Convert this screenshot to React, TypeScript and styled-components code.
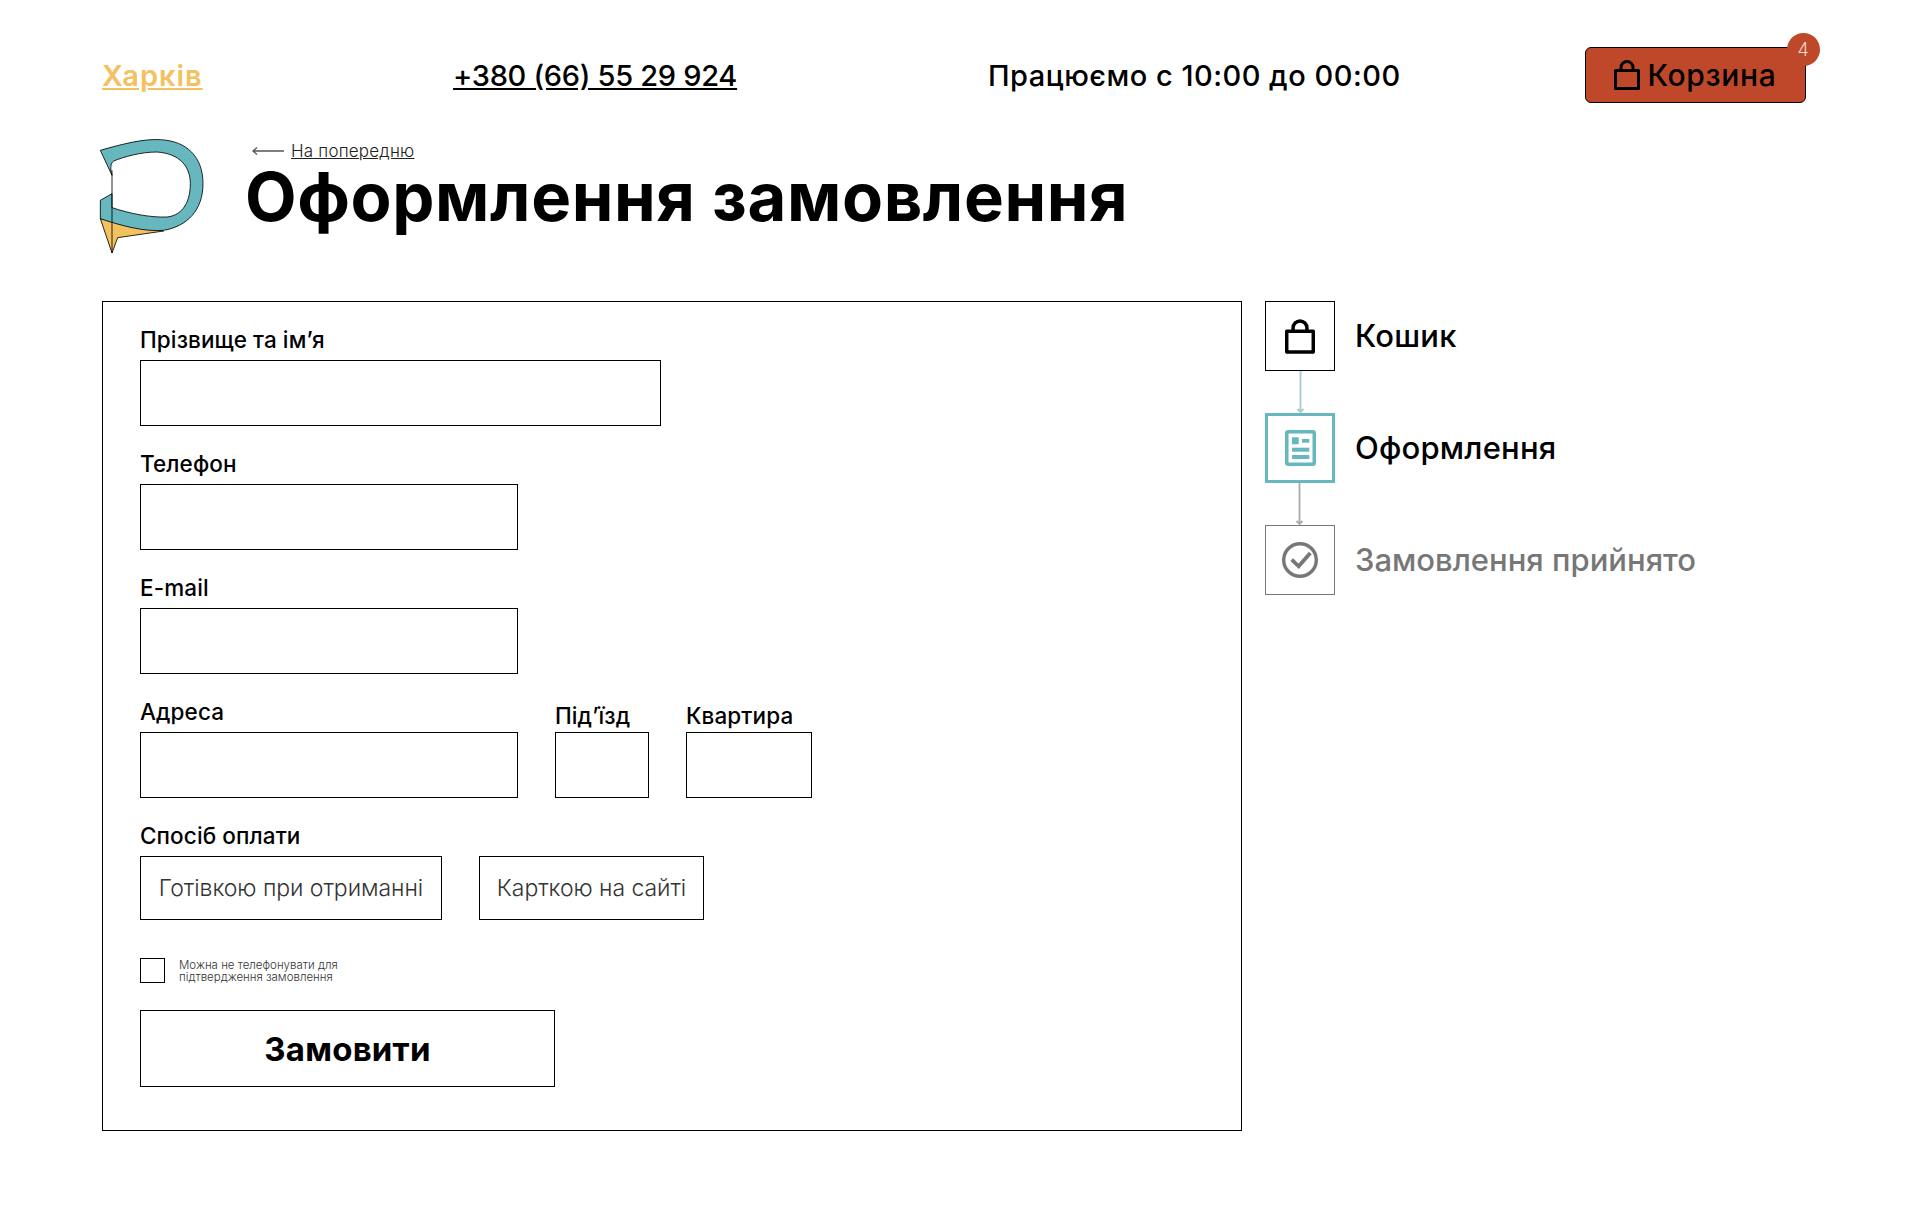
import styled, { createGlobalStyle } from 'styled-components';

const GlobalStyle = createGlobalStyle`
  * { box-sizing: border-box; }
  body {
    margin: 0;
    background: #fff;
    color: #000;
    font-family: Inter, "Noto Sans", sans-serif;
  }
`;

const Page = styled.div`
  width: 1920px;
  height: 1209px;
  padding: 47px 114px 0 102px;
`;

const Header = styled.header`
  display: flex;
  align-items: center;
  height: 56px;
  font-size: 29px;
`;

const City = styled.a`
  width: 351px;
  color: #f4c15f;
  font-weight: 600;
  letter-spacing: 1px;
  text-decoration: underline;
`;

const Phone = styled.a`
  width: 535px;
  font-weight: 500;
  letter-spacing: -0.3px;
  text-decoration: underline;
`;

const Hours = styled.span`
  width: 597px;
  font-weight: 500;
  letter-spacing: 0.5px;
`;

const CartButton = styled.button`
  position: relative;
  display: flex;
  align-items: center;
  justify-content: center;
  gap: 7px;
  width: 221px;
  height: 56px;
  padding: 0;
  background: #bf482b;
  border: 1px solid #000;
  border-radius: 6px;
  color: #000;
  font: 500 30px Inter, sans-serif;
  letter-spacing: 0.7px;
`;

const Badge = styled.span`
  position: absolute;
  top: -15px;
  right: -15px;
  width: 33px;
  height: 33px;
  border-radius: 50%;
  background: #bf482b;
  color: #f5d9d0;
  font-size: 18px;
  font-weight: 300;
  line-height: 33px;
  text-align: center;
`;

const TitleRow = styled.div`
  display: flex;
  align-items: flex-start;
  margin-top: 37px;
`;

const Logo = styled.svg`
  flex: none;
  width: 110px;
  height: 120px;
  margin: -3px 0 0 -5px;
`;

const TitleCol = styled.div`
  display: flex;
  flex-direction: column;
  margin-left: 38px;
`;

const BackLink = styled.a`
  display: flex;
  align-items: center;
  gap: 7px;
  margin-left: 7px;
  height: 22px;
  font-size: 17px;
  font-weight: 300;
  letter-spacing: 0.2px;
  color: #222;

  span {
    text-decoration: underline;
  }
`;

const Title = styled.h1`
  margin: 0;
  font-size: 67px;
  line-height: 70px;
  font-weight: 700;
  letter-spacing: 0.6px;
  white-space: nowrap;
`;

const Main = styled.main`
  display: flex;
  align-items: flex-start;
  margin-top: 44px;
`;

const Form = styled.form`
  width: 1140px;
  height: 830px;
  padding: 21px 37px 0;
  border: 1px solid #000;
`;

const Row = styled.div`
  display: flex;
  align-items: flex-end;
  gap: 37px;
  margin-bottom: 21px;
`;

const Field = styled.label`
  display: flex;
  flex-direction: column;
`;

const Label = styled.span<{ $low?: boolean }>`
  margin-bottom: ${p => (p.$low ? 0 : 3)}px;
  font-size: 22.5px;
  line-height: ${p => (p.$low ? 32 : 34)}px;
  font-weight: 500;
  letter-spacing: 0.1px;
`;

const Input = styled.input<{ $w: number }>`
  display: block;
  width: ${p => p.$w}px;
  height: 66px;
  background: #fff;
  border: 1px solid #000;
  border-radius: 0;
`;

const Options = styled.div`
  display: flex;
  gap: 37px;
`;

const Option = styled.button<{ $w: number }>`
  width: ${p => p.$w}px;
  height: 64px;
  padding: 0;
  background: #fff;
  border: 1px solid #000;
  color: #333;
  font: 300 23px Inter, sans-serif;
  letter-spacing: -0.05px;
`;

const Consent = styled.label`
  display: flex;
  align-items: center;
  gap: 14px;
  margin-top: 38px;
`;

const Check = styled.span`
  width: 25px;
  height: 25px;
  border: 1px solid #000;
`;

const ConsentText = styled.span`
  width: 200px;
  font-size: 11.5px;
  line-height: 12px;
  font-weight: 300;
  color: #333;
`;

const Submit = styled.button`
  display: block;
  width: 415px;
  height: 77px;
  margin-top: 27px;
  background: #fff;
  border: 1px solid #000;
  color: #000;
  font: 700 33px Inter, sans-serif;
  letter-spacing: 0.2px;
`;

const Steps = styled.aside`
  display: flex;
  flex-direction: column;
  margin-left: 23px;
`;

const Step = styled.div`
  display: flex;
  align-items: center;
  gap: 20px;
`;

const StepBox = styled.div<{ $color: string; $thick?: boolean }>`
  display: flex;
  align-items: center;
  justify-content: center;
  width: 70px;
  height: 70px;
  border: ${p => (p.$thick ? 3 : 1)}px solid ${p => p.$color};
  color: ${p => p.$color};
`;

const StepName = styled.span<{ $muted?: boolean }>`
  padding-bottom: 2px;
  font-size: 31px;
  font-weight: 500;
  letter-spacing: ${p => (p.$muted ? 0 : 0.2)}px;
  color: ${p => (p.$muted ? '#777' : '#000')};
`;

const Connector = styled.svg`
  display: block;
  width: 70px;
  height: 42px;
`;

const BagIcon = ({ w, h }: { w: number; h: number }) => (
  <svg width={w} height={h} viewBox="0 0 26 30" fill="none" stroke="currentColor" strokeWidth="3" strokeLinejoin="round">
    <path d="M1.5 10.5h23v18h-23z" />
    <path d="M7 10.5V7.5a6 6 0 0 1 12 0v3" />
  </svg>
);

const App = () => {
  return (
    <Page>
      <GlobalStyle />
      <Header>
        <City>Харків</City>
        <Phone>+380 (66) 55 29 924</Phone>
        <Hours>Працюємо с 10:00 до 00:00</Hours>
        <CartButton>
          <BagIcon w={26} h={30} />
          Корзина
          <Badge>4</Badge>
        </CartButton>
      </Header>

      <TitleRow>
        <Logo viewBox="50 50 330 360">
          <path d="M60 295L95 398L112 352L250 332L200 320Z" fill="#f4c15f" stroke="#000" strokeWidth="2.5" strokeLinejoin="round" />
          <path
            d="M60 90C130 70 190 55 240 58C320 62 368 110 368 190C368 270 320 318 250 330C190 335 120 315 60 295V240L95 220V262C150 280 210 292 260 290C310 285 330 240 330 190C330 140 300 100 230 95C180 95 130 110 100 122C92 128 88 140 95 165Z"
            fill="#67b7bf"
            stroke="#000"
            strokeWidth="2.5"
            strokeLinejoin="round"
          />
          <path d="M95 150V398" stroke="#000" strokeWidth="2.5" fill="none" />
        </Logo>
        <TitleCol>
          <BackLink>
            <svg width="32" height="10" viewBox="0 0 32 10" fill="none" stroke="#555" strokeWidth="1.3">
              <path d="M32 5H1M5 1.5L1 5l4 3.5" />
            </svg>
            <span>На попередню</span>
          </BackLink>
          <Title>Оформлення замовлення</Title>
        </TitleCol>
      </TitleRow>

      <Main>
        <Form>
          <Row>
            <Field>
              <Label>Прізвище та ім’я</Label>
              <Input $w={521} />
            </Field>
          </Row>
          <Row>
            <Field>
              <Label>Телефон</Label>
              <Input $w={378} />
            </Field>
          </Row>
          <Row>
            <Field>
              <Label>E-mail</Label>
              <Input $w={378} />
            </Field>
          </Row>
          <Row>
            <Field>
              <Label>Адреса</Label>
              <Input $w={378} />
            </Field>
            <Field>
              <Label $low>Під’їзд</Label>
              <Input $w={94} />
            </Field>
            <Field>
              <Label $low>Квартира</Label>
              <Input $w={126} />
            </Field>
          </Row>
          <Field as="div">
            <Label>Спосіб оплати</Label>
            <Options>
              <Option type="button" $w={302}>Готівкою при отриманні</Option>
              <Option type="button" $w={225}>Карткою на сайті</Option>
            </Options>
          </Field>
          <Consent>
            <Check />
            <ConsentText>Можна не телефонувати для підтвердження замовлення</ConsentText>
          </Consent>
          <Submit type="button">Замовити</Submit>
        </Form>

        <Steps>
          <Step>
            <StepBox $color="#000">
              <BagIcon w={30} h={35} />
            </StepBox>
            <StepName>Кошик</StepName>
          </Step>
          <Connector viewBox="0 0 70 42" fill="none" stroke="#a9c9cc" strokeWidth="1.8">
            <path d="M35.5 0V41M32.5 38l3 3 3-3" />
          </Connector>
          <Step>
            <StepBox $color="#67b7bf" $thick>
              <svg width="31" height="36" viewBox="0 0 31 36" fill="none">
                <rect x="1.75" y="1.75" width="27.5" height="32.5" rx="1.5" stroke="currentColor" strokeWidth="3.5" />
                <rect x="7" y="7.3" width="6.7" height="7" fill="currentColor" />
                <rect x="17" y="9" width="7.3" height="3.7" fill="currentColor" />
                <rect x="7" y="17.7" width="17.3" height="4" fill="currentColor" />
                <rect x="7" y="25" width="17.3" height="4" fill="currentColor" />
              </svg>
            </StepBox>
            <StepName>Оформлення</StepName>
          </Step>
          <Connector viewBox="0 0 70 42" fill="none" stroke="#aaa" strokeWidth="1.8">
            <path d="M34.5 0V41M31.5 38l3 3 3-3" />
          </Connector>
          <Step>
            <StepBox $color="#777">
              <svg width="36" height="36" viewBox="0 0 36 36" fill="none" stroke="currentColor">
                <circle cx="18" cy="18" r="16.3" strokeWidth="3.4" />
                <path d="M9.7 17.7l7 6.6L28.3 11" strokeWidth="3.8" />
              </svg>
            </StepBox>
            <StepName $muted>Замовлення прийнято</StepName>
          </Step>
        </Steps>
      </Main>
    </Page>
  );
};

export default App;
